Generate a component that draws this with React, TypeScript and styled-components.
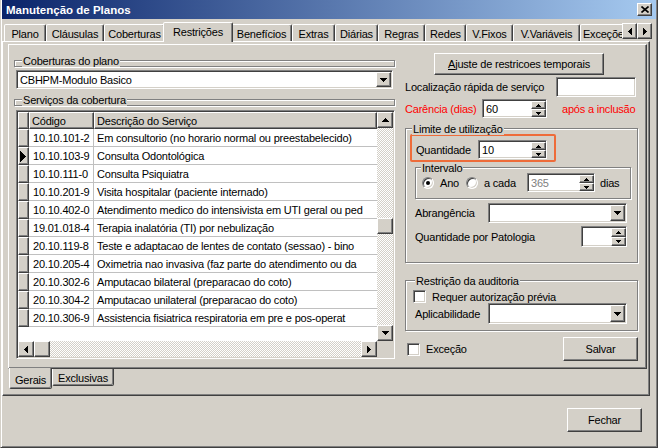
import React from 'react';
import styled, { createGlobalStyle, css } from 'styled-components';

const FACE = '#D4D0C8';

const GlobalStyle = createGlobalStyle`
  * { box-sizing: border-box; }
  html, body { margin: 0; padding: 0; background: ${FACE}; }
  body {
    font-family: "Liberation Sans", Arial, sans-serif;
    font-size: 11px;
    line-height: 12px;
    letter-spacing: -0.2px;
    color: #000;
  }
`;

const raised = css`
  background: ${FACE};
  border: 1px solid;
  border-color: #fff #404040 #404040 #fff;
  box-shadow: inset -1px -1px #808080;
`;

const sunken = css`
  background: #fff;
  border: 1px solid;
  border-color: #808080 #fff #fff #808080;
  box-shadow: inset 1px 1px #404040, inset -1px -1px ${FACE};
`;

const checker = css`
  background-color: ${FACE};
  background-image: repeating-conic-gradient(#fff 0% 25%, ${FACE} 0% 50%);
  background-size: 2px 2px;
`;

/* ---------- window chrome ---------- */

const Window = styled.div`
  width: 658px;
  height: 448px;
  display: flex;
  flex-direction: column;
  background: ${FACE};
  border-left: 1px solid ${FACE};
  border-right: 1px solid #404040;
  border-bottom: 1px solid #404040;
  box-shadow: inset 1px 0 #fff, inset -1px -1px #808080;
  padding: 0 1px 1px 1px;
  overflow: hidden;
`;

const TitleBar = styled.div`
  height: 19px;
  flex-shrink: 0;
  display: flex;
  align-items: center;
  justify-content: space-between;
  padding: 0 4px;
  background: linear-gradient(to right, #0a246a, #a6caf0);
`;

const Title = styled.span`
  color: #fff;
  font-weight: bold;
  font-size: 11.5px;
  letter-spacing: 0;
`;

const CloseBtn = styled.div`
  ${raised};
  width: 15px;
  height: 13px;
  display: flex;
  align-items: center;
  justify-content: center;
`;

/* ---------- top tabs ---------- */

const TabStrip = styled.div`
  height: 22px;
  flex-shrink: 0;
  display: flex;
  align-items: flex-end;
  padding: 0 4px 0 2px;
`;

const TabList = styled.div`
  flex: 1;
  min-width: 0;
  display: flex;
  align-items: flex-end;
  clip-path: inset(-5px 0 -5px 0);
`;

const Tab = styled.div<{ $w: number; $active?: boolean }>`
  flex-shrink: 0;
  position: relative;
  z-index: ${p => (p.$active ? 1 : 0)};
  width: ${p => p.$w + (p.$active ? 4 : 0)}px;
  height: ${p => (p.$active ? 20 : 17)}px;
  margin: 0 ${p => (p.$active ? -2 : 0)}px ${p => (p.$active ? -1 : 0)}px;
  background: ${FACE};
  border: 1px solid;
  border-bottom: none;
  border-color: #fff #404040 transparent #fff;
  border-top-left-radius: 2px;
  border-top-right-radius: 2px;
  box-shadow: inset -1px 0 #808080;
  padding-top: 3px;
  text-align: center;
  white-space: nowrap;
`;

const TabArrows = styled.div`
  display: flex;
  margin-bottom: 2px;
`;

const SmallBtn = styled.div<{ $w?: number; $h?: number }>`
  ${raised};
  width: ${p => p.$w ?? 16}px;
  height: ${p => p.$h ?? 16}px;
  flex-shrink: 0;
  display: flex;
  align-items: center;
  justify-content: center;
`;

const MainPanel = styled.div`
  width: 648px;
  height: 355px;
  flex-shrink: 0;
  border: 1px solid;
  border-color: #fff #404040 #404040 #fff;
  box-shadow: inset -1px -1px #808080;
  padding: 2px 0 0 5px;
  display: flex;
  flex-direction: column;
`;

const InnerPage = styled.div`
  width: 639px;
  height: 325px;
  flex-shrink: 0;
  border: 1px solid;
  border-color: #fff #404040 #404040 #fff;
  box-shadow: inset -1px -1px #808080;
  padding: 0 0 0 5px;
  display: flex;
  gap: 10px;
`;

const BottomTabs = styled.div`
  display: flex;
  align-items: flex-start;
  padding-left: 1px;
`;

const BottomTab = styled.div<{ $w: number; $active?: boolean }>`
  position: relative;
  z-index: ${p => (p.$active ? 1 : 0)};
  width: ${p => p.$w}px;
  height: ${p => (p.$active ? 21 : 17)}px;
  margin-top: ${p => (p.$active ? -1 : 0)}px;
  background: ${FACE};
  border: 1px solid;
  border-top: none;
  border-color: transparent #404040 #404040 #fff;
  border-bottom-left-radius: 2px;
  border-bottom-right-radius: 2px;
  box-shadow: inset -1px -1px #808080;
  padding-top: ${p => (p.$active ? 6 : 3)}px;
  text-align: center;
`;

const Footer = styled.div`
  display: flex;
  justify-content: flex-end;
  padding: 12px 14px 0 0;
`;

const Button = styled.div<{ $w: number; $h?: number; $ml?: number }>`
  ${raised};
  width: ${p => p.$w}px;
  height: ${p => p.$h ?? 24}px;
  margin-left: ${p => p.$ml ?? 0}px;
  flex-shrink: 0;
  display: flex;
  align-items: center;
  justify-content: center;
  white-space: nowrap;
`;

/* ---------- left column ---------- */

const LeftCol = styled.div`
  width: 381px;
  flex-shrink: 0;
  display: flex;
  flex-direction: column;
  padding-top: 15px;
`;

const Group = styled.div<{ $w: number; $h: number; $mt?: number; $ml?: number }>`
  position: relative;
  flex-shrink: 0;
  width: ${p => p.$w}px;
  height: ${p => p.$h}px;
  margin: ${p => p.$mt ?? 0}px 0 0 ${p => p.$ml ?? 0}px;
  border: 1px solid #808080;
  box-shadow: 1px 1px 0 #fff, inset 1px 1px 0 #fff;
  display: flex;
  flex-direction: column;
`;

const Caption = styled.span<{ $x?: number }>`
  position: absolute;
  top: -6px;
  left: ${p => p.$x ?? 6}px;
  padding: 0 1px;
  background: ${FACE};
  white-space: nowrap;
`;

const Combo = styled.div<{ $w: number; $h: number; $mt?: number; $ml?: number }>`
  ${sunken};
  width: ${p => p.$w}px;
  height: ${p => p.$h}px;
  margin: ${p => p.$mt ?? 0}px 0 0 ${p => p.$ml ?? 0}px;
  flex-shrink: 0;
  display: flex;
  align-items: stretch;
  padding: 1px;
`;

const ComboText = styled.span`
  flex: 1;
  display: flex;
  align-items: center;
  padding-left: 2px;
  white-space: nowrap;
`;

const Grid = styled.div`
  ${sunken};
  width: 379px;
  height: 249px;
  margin: 4px 0 0 2px;
  padding: 1px;
  display: flex;
`;

const GridMain = styled.div`
  flex: 1;
  min-width: 0;
  display: flex;
  flex-direction: column;
`;

const GridRow = styled.div<{ $h: number }>`
  display: grid;
  grid-template-columns: 11px 65px 1fr;
  height: ${p => p.$h}px;
  flex-shrink: 0;
`;

const HeadCell = styled.div`
  ${raised};
  display: flex;
  align-items: center;
  padding-left: 2px;
  white-space: nowrap;
  overflow: hidden;
`;

const IndCell = styled.div`
  ${raised};
  display: flex;
  align-items: center;
  padding-left: 1px;
`;

const DataCell = styled.div<{ $pl: number; $line?: boolean }>`
  background: #fff;
  border-bottom: 1px solid #c0c0c0;
  border-right: ${p => (p.$line ? '1px solid #c0c0c0' : 'none')};
  padding-left: ${p => p.$pl}px;
  display: flex;
  align-items: center;
  white-space: nowrap;
  overflow: hidden;
`;

const GridBody = styled.div`
  flex: 1;
  background: #fff;
`;

const HScroll = styled.div`
  height: 16px;
  flex-shrink: 0;
  display: flex;
`;

const VScrollCol = styled.div`
  width: 16px;
  flex-shrink: 0;
  display: flex;
  flex-direction: column;
`;

const Track = styled.div<{ $dir: 'row' | 'column'; $off: number }>`
  ${checker};
  flex: 1;
  display: flex;
  flex-direction: ${p => p.$dir};
  padding-${p => (p.$dir === 'row' ? 'left' : 'top')}: ${p => p.$off}px;
`;

const Corner = styled.div`
  height: 16px;
  background: ${FACE};
`;

/* ---------- right column ---------- */

const RightCol = styled.div`
  width: 233px;
  flex-shrink: 0;
  display: flex;
  flex-direction: column;
  padding-top: 8px;
`;

const Row = styled.div<{ $h: number; $mt?: number; $ml?: number }>`
  display: flex;
  align-items: center;
  flex-shrink: 0;
  height: ${p => p.$h}px;
  margin: ${p => p.$mt ?? 0}px 0 0 ${p => p.$ml ?? 0}px;
`;

const Label = styled.span<{ $w?: number; $red?: boolean; $ml?: number }>`
  flex-shrink: 0;
  width: ${p => (p.$w ? `${p.$w}px` : 'auto')};
  margin-left: ${p => p.$ml ?? 0}px;
  color: ${p => (p.$red ? '#ff0000' : '#000')};
  white-space: nowrap;
`;

const Edit = styled.div<{ $w: number; $h: number; $mr?: number }>`
  ${sunken};
  width: ${p => p.$w}px;
  height: ${p => p.$h}px;
  margin-left: auto;
  margin-right: ${p => p.$mr ?? 0}px;
  flex-shrink: 0;
`;

const SpinBox = styled.div<{ $w: number; $h: number; $ml?: number }>`
  ${sunken};
  width: ${p => p.$w}px;
  height: ${p => p.$h}px;
  margin-left: ${p => p.$ml ?? 0}px;
  flex-shrink: 0;
  display: flex;
  padding: 1px 0 0 1px;
`;

const SpinText = styled.span<{ $disabled?: boolean }>`
  flex: 1;
  display: flex;
  align-items: center;
  padding-left: 2px;
  color: ${p => (p.$disabled ? '#808080' : '#000')};
`;

const SpinBtns = styled.div`
  width: 15px;
  display: flex;
  flex-direction: column;
`;

const SpinBtn = styled.div`
  ${raised};
  flex: 1;
  display: flex;
  align-items: center;
  justify-content: center;
`;

const Highlight = styled.div`
  display: flex;
  align-items: center;
  flex-shrink: 0;
  width: 146px;
  height: 28px;
  margin: 5px 0 0 4px;
  border: 2px solid #ee6c3a;
  border-radius: 2px;
  padding: 4px 0 1px 4px;
`;

const RadioItem = styled.label<{ $w: number }>`
  display: flex;
  align-items: center;
  gap: 6px;
  width: ${p => p.$w}px;
  flex-shrink: 0;
`;

const RadioCircle = styled.span<{ $on?: boolean }>`
  width: 12px;
  height: 12px;
  border-radius: 50%;
  flex-shrink: 0;
  border: 1px solid;
  border-color: #808080 #fff #fff #808080;
  box-shadow: inset 1px 1px #404040, inset -1px -1px ${FACE};
  background: #fff;
  display: flex;
  align-items: center;
  justify-content: center;
  &::after {
    content: '';
    width: 4px;
    height: 4px;
    border-radius: 50%;
    background: ${p => (p.$on ? '#000' : 'transparent')};
  }
`;

const CheckBox = styled.span`
  ${sunken};
  width: 13px;
  height: 13px;
  flex-shrink: 0;
  margin-right: 6px;
`;

/* ---------- drawings ---------- */

type Dir = 'up' | 'down' | 'left' | 'right';

const Arrow = ({ dir, b = 7 }: { dir: Dir; b?: number }) => {
  const h = Math.ceil(b / 2);
  const pts = {
    down: `0,0 ${b},0 ${b / 2},${h}`,
    up: `0,${h} ${b},${h} ${b / 2},0`,
    right: `0,0 ${h},${b / 2} 0,${b}`,
    left: `${h},0 0,${b / 2} ${h},${b}`,
  }[dir];
  const vertical = dir === 'up' || dir === 'down';
  return (
    <svg width={vertical ? b : h} height={vertical ? h : b} shapeRendering="crispEdges">
      <polygon points={pts} fill="#000" />
    </svg>
  );
};

const Spin = ({ w, h, value, disabled, ml }: { w: number; h: number; value?: string; disabled?: boolean; ml?: number }) => (
  <SpinBox $w={w} $h={h} $ml={ml}>
    <SpinText $disabled={disabled}>{value}</SpinText>
    <SpinBtns>
      <SpinBtn><Arrow dir="up" b={5} /></SpinBtn>
      <SpinBtn><Arrow dir="down" b={5} /></SpinBtn>
    </SpinBtns>
  </SpinBox>
);

const DropDown = ({ w, h, text, mt, ml }: { w: number; h: number; text?: string; mt?: number; ml?: number }) => (
  <Combo $w={w} $h={h} $mt={mt} $ml={ml}>
    <ComboText>{text}</ComboText>
    <SmallBtn $w={15} $h={h - 4}><Arrow dir="down" /></SmallBtn>
  </Combo>
);

/* ---------- data ---------- */

const tabs = [
  { label: 'Plano', w: 42 },
  { label: 'Cláusulas', w: 58 },
  { label: 'Coberturas', w: 61 },
  { label: 'Restrições', w: 66, active: true },
  { label: 'Benefícios', w: 61 },
  { label: 'Extras', w: 43 },
  { label: 'Diárias', w: 43 },
  { label: 'Regras', w: 47 },
  { label: 'Redes', w: 41 },
  { label: 'V.Fixos', w: 47 },
  { label: 'V.Variáveis', w: 67 },
  { label: 'Exceções', w: 52 },
];

const services = [
  ['10.10.101-2', 'Em consultorio (no horario normal ou preestabelecido)'],
  ['10.10.103-9', 'Consulta Odontológica'],
  ['10.10.111-0', 'Consulta Psiquiatra'],
  ['10.10.201-9', 'Visita hospitalar (paciente internado)'],
  ['10.10.402-0', 'Atendimento medico do intensivista em UTI geral ou ped'],
  ['19.01.018-4', 'Terapia inalatória (TI) por nebulização'],
  ['20.10.119-8', 'Teste e adaptacao de lentes de contato (sessao) - bino'],
  ['20.10.205-4', 'Oximetria nao invasiva (faz parte do atendimento ou da'],
  ['20.10.302-6', 'Amputacao bilateral (preparacao do coto)'],
  ['20.10.304-2', 'Amputacao unilateral (preparacao do coto)'],
  ['20.10.306-9', 'Assistencia fisiatrica respiratoria em pre e pos-operat'],
];

const App = () => {
  return (
    <>
      <GlobalStyle />
      <Window>
        <TitleBar>
          <Title>Manutenção de Planos</Title>
          <CloseBtn>
            <svg width="8" height="7" viewBox="0 0 8 7">
              <path d="M0.5 0.5 L7.5 6.5 M7.5 0.5 L0.5 6.5" stroke="#000" strokeWidth="1.6" />
            </svg>
          </CloseBtn>
        </TitleBar>

        <TabStrip>
          <TabList>
            {tabs.map(t => (
              <Tab key={t.label} $w={t.w} $active={t.active}>{t.label}</Tab>
            ))}
          </TabList>
          <TabArrows>
            <SmallBtn $w={15}><Arrow dir="left" /></SmallBtn>
            <SmallBtn $w={15}><Arrow dir="right" /></SmallBtn>
          </TabArrows>
        </TabStrip>

        <MainPanel>
          <InnerPage>
            <LeftCol>
              <Group $w={381} $h={7}>
                <Caption $x={7}>Coberturas do plano</Caption>
              </Group>
              <DropDown w={377} h={19} mt={3} ml={2} text="CBHPM-Modulo Basico" />
              <Group $w={381} $h={7} $mt={10}>
                <Caption $x={7}>Serviços da cobertura</Caption>
              </Group>

              <Grid>
                <GridMain>
                  <GridRow $h={17}>
                    <HeadCell />
                    <HeadCell>Código</HeadCell>
                    <HeadCell>Descrição do Serviço</HeadCell>
                  </GridRow>
                  <GridBody>
                    {services.map(([code, desc], i) => (
                      <GridRow key={code} $h={18}>
                        <IndCell>{i === 1 && <Arrow dir="right" b={11} />}</IndCell>
                        <DataCell $pl={4} $line>{code}</DataCell>
                        <DataCell $pl={3}>{desc}</DataCell>
                      </GridRow>
                    ))}
                  </GridBody>
                  <HScroll>
                    <SmallBtn><Arrow dir="left" /></SmallBtn>
                    <Track $dir="row" $off={0}>
                      <SmallBtn />
                    </Track>
                    <SmallBtn><Arrow dir="right" /></SmallBtn>
                  </HScroll>
                </GridMain>
                <VScrollCol>
                  <SmallBtn><Arrow dir="up" /></SmallBtn>
                  <Track $dir="column" $off={90}>
                    <SmallBtn />
                  </Track>
                  <SmallBtn><Arrow dir="down" /></SmallBtn>
                  <Corner />
                </VScrollCol>
              </Grid>
            </LeftCol>

            <RightCol>
              <Button $w={170} $h={22} $ml={29}>
                <span><u>A</u>juste de restricoes temporais</span>
              </Button>
              <Row $h={20} $mt={2}>
                <Label>Localização rápida de serviço</Label>
                <Edit $w={80} $h={20} $mr={2} />
              </Row>
              <Row $h={19} $mt={2}>
                <Label $w={77} $red>Carência (dias)</Label>
                <Spin w={65} h={19} value="60" />
                <Label $red $ml={15}>após a inclusão</Label>
              </Row>

              <Group $w={233} $h={135} $mt={10}>
                <Caption $x={6}>Limite de utilização</Caption>
                <Highlight>
                  <Label $w={62}>Quantidade</Label>
                  <Spin w={69} h={19} value="10" />
                </Highlight>
                <Group $w={216} $h={32} $mt={5} $ml={9}>
                  <Caption $x={5}>Intervalo</Caption>
                  <Row $h={19} $mt={5} $ml={6}>
                    <RadioItem $w={44}>
                      <RadioCircle $on />
                      Ano
                    </RadioItem>
                    <RadioItem $w={61}>
                      <RadioCircle />
                      a cada
                    </RadioItem>
                    <Spin w={68} h={19} value="365" disabled />
                    <Label $ml={5}>dias</Label>
                  </Row>
                </Group>
                <Row $h={20} $mt={4} $ml={9}>
                  <Label $w={73}>Abrangência</Label>
                  <DropDown w={139} h={20} />
                </Row>
                <Row $h={21} $mt={3} $ml={9}>
                  <Label $w={166}>Quantidade por Patologia</Label>
                  <Spin w={46} h={21} />
                </Row>
              </Group>

              <Group $w={233} $h={51} $mt={17}>
                <Caption $x={9}>Restrição da auditoria</Caption>
                <Row $h={13} $mt={9} $ml={7}>
                  <CheckBox />
                  <Label>Requer autorização prévia</Label>
                </Row>
                <Row $h={21} $ml={9}>
                  <Label $w={73}>Aplicabilidade</Label>
                  <DropDown w={139} h={21} />
                </Row>
              </Group>

              <Row $h={24} $mt={6} $ml={2}>
                <CheckBox />
                <Label>Exceção</Label>
                <Button $w={75} style={{ marginLeft: 'auto' }}>Salvar</Button>
              </Row>
            </RightCol>
          </InnerPage>

          <BottomTabs>
            <BottomTab $w={43} $active>Gerais</BottomTab>
            <BottomTab $w={62}>Exclusivas</BottomTab>
          </BottomTabs>
        </MainPanel>

        <Footer>
          <Button $w={75}>Fechar</Button>
        </Footer>
      </Window>
    </>
  );
};

export default App;
